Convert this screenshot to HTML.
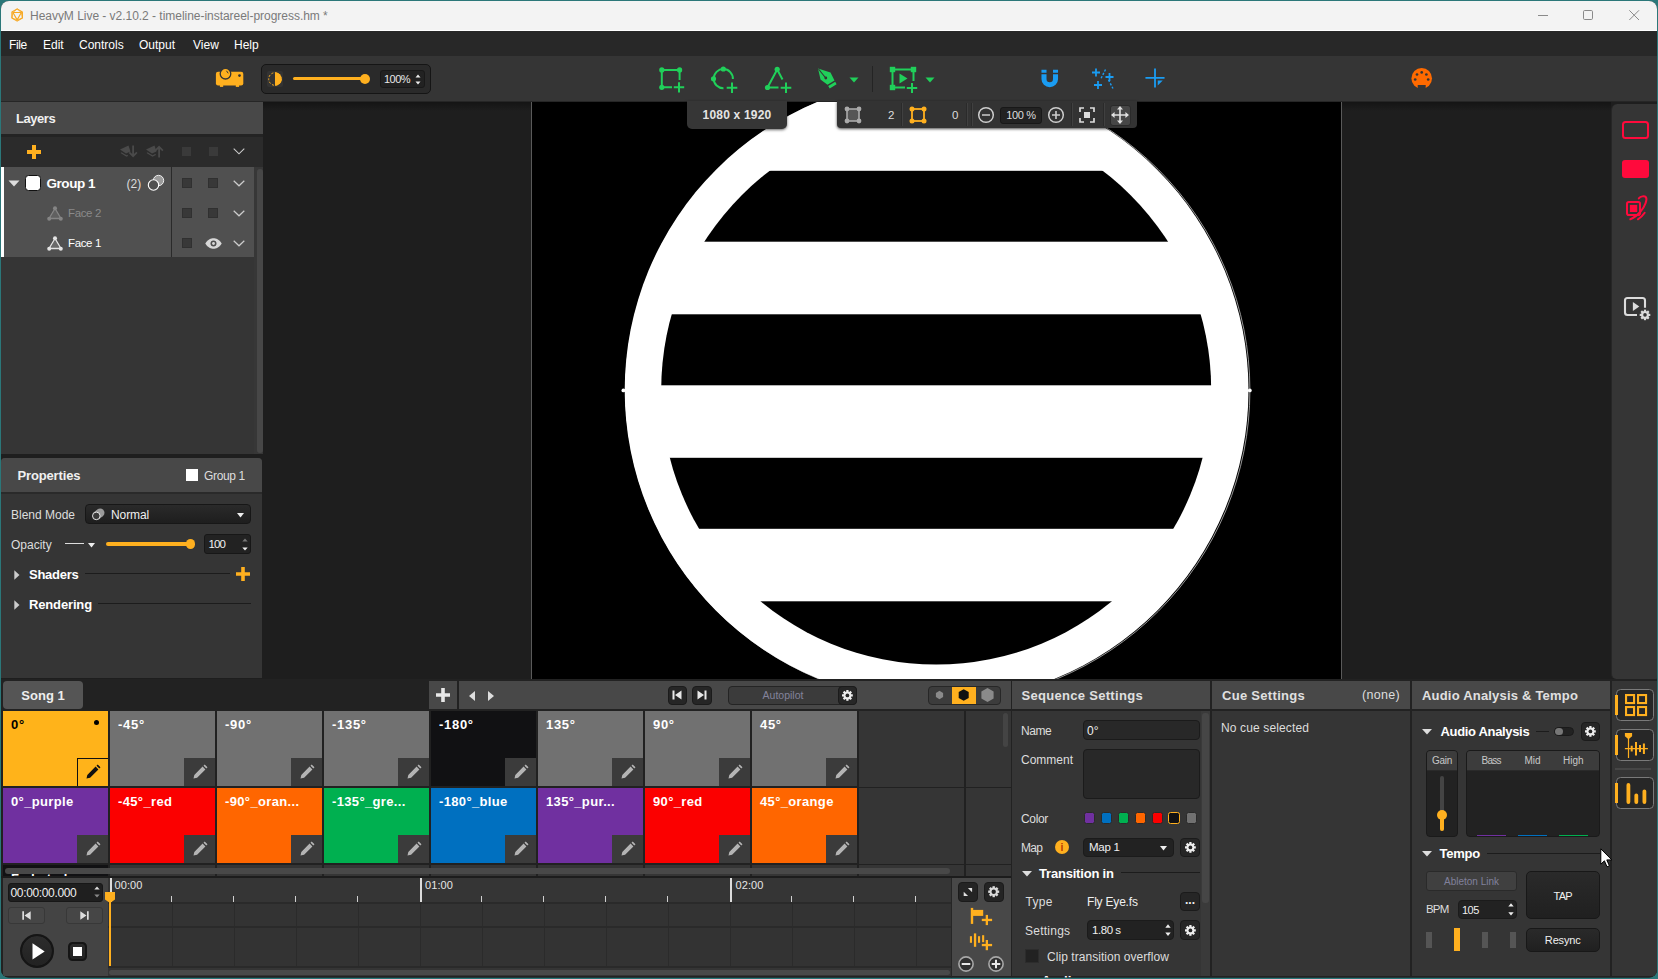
<!DOCTYPE html><html><head><meta charset="utf-8"><title>HeavyM Live</title><style>*{box-sizing:border-box;margin:0;padding:0}
html,body{width:1658px;height:979px;overflow:hidden;background:#2b7779;font-family:"Liberation Sans",sans-serif;font-size:12px;color:#e6e6e6}
#win{position:absolute;left:0;top:0;width:1658px;height:979px;overflow:hidden;background:#1e1e1e;clip-path:inset(1px 1px 1.5px 1px round 8px)}
.a{position:absolute}
.b{font-weight:bold}
svg{position:absolute;overflow:visible}
/* title */
#title{left:0;top:0;width:1658px;height:31px;background:#f3f3f3;border-bottom:1px solid #fff}
#title .t{left:30px;top:9px;font-size:12px;color:#7a7a7a;white-space:nowrap;letter-spacing:-0.03px}
#menu{left:0;top:31px;width:1658px;height:25px;background:#282828}
#menu span{position:absolute;top:7px;font-size:12px;color:#fff;white-space:nowrap}
#tool{left:0;top:56px;width:1658px;height:46px;background:#353535;border-bottom:1px solid #262626}
.ck{width:10px;height:10px;background:#383838;border:1px solid #303030}
</style></head><body>
<div id="win">
<div id="title" class="a">
<svg style="left:10.900px;top:8px" width="12.300" height="14" viewBox="0 0 14 16"><g fill="none" stroke="#f7a823" stroke-width="1.3" stroke-linejoin="round"><path d="M7 1 L13 4.5 L13 11.5 L7 15 L1 11.5 L1 4.5 Z"/><path d="M2.2 5.2 L11.8 5.2 L7 13.6 Z"/><path d="M7 1 L2.2 5.2 M7 1 L11.8 5.2 M1 11.5 L2.2 5.2 M13 11.5 L11.8 5.2 M1 11.5 L7 13.6 L13 11.5" stroke-width="0.9"/></g></svg>
<div class="a t">HeavyM Live - v2.10.2 - timeline-instareel-progress.hm *</div>
<svg style="left:1538px;top:15px" width="12" height="2"><path d="M0 0.5H10" stroke="#8a8a8a" stroke-width="1"/></svg>
<svg style="left:1583px;top:10px" width="12" height="12"><rect x="0.5" y="0.5" width="9" height="9" rx="1.2" fill="none" stroke="#8a8a8a" stroke-width="1"/></svg>
<svg style="left:1629px;top:10px" width="12" height="12"><path d="M0.3 0.3L10 10M10 0.3L0.3 10" stroke="#8a8a8a" stroke-width="1"/></svg>
</div>
<div id="menu" class="a"><span style="left:9px;letter-spacing:-0.4px">File</span><span style="left:43px">Edit</span><span style="left:79px">Controls</span><span style="left:139px">Output</span><span style="left:193px">View</span><span style="left:234px">Help</span></div>
<div id="tool" class="a">
<!-- projector -->
<svg style="left:205px;top:4px" width="50" height="40" viewBox="205 60 50 40"><rect x="215.900" y="71.700" width="27.400" height="13.700" rx="2.200" fill="#ffb01f"/><rect x="219.900" y="84" width="3.300" height="2.900" fill="#ffb01f"/><rect x="235.800" y="84" width="3.300" height="2.900" fill="#ffb01f"/><circle cx="225.500" cy="73.700" r="5.300" fill="#ffb01f" stroke="#353535" stroke-width="1.300"/><path d="M226.700 71.100L228 73" stroke="#353535" stroke-width="1" stroke-linecap="round"/><circle cx="239.500" cy="75.600" r="1.350" fill="#353535"/></svg>
<!-- brightness box -->
<div class="a" style="left:261px;top:8px;width:170px;height:30px;background:#2a2a2a;border:1px solid #151515;border-radius:5px"></div>
<svg style="left:267px;top:15px" width="16" height="16" viewBox="0 0 16 16"><rect x="0" y="0" width="16" height="16" rx="2" fill="#333"/><circle cx="8" cy="8" r="6.3" fill="none" stroke="#ffb01f" stroke-width="1" stroke-dasharray="2 1.6"/><path d="M8 1.2a6.8 6.8 0 0 1 0 13.6z" fill="#ffb01f"/></svg>
<div class="a" style="left:293px;top:21px;width:70px;height:3px;background:#ffb01f;border-radius:2px"></div>
<div class="a" style="left:360px;top:17.5px;width:10px;height:10px;background:#ffb01f;border-radius:5px"></div>
<div class="a" style="left:380px;top:14px;width:45px;height:18px;background:#222;border:1px solid #191919;border-radius:3px"></div>
<div class="a" style="left:384px;top:17px;font-size:11px;color:#e8e8e8;letter-spacing:-0.5px">100%</div>
<svg style="left:415px;top:18px" width="6" height="11" viewBox="0 0 6 11"><path d="M0.5 3.5L3 0.5L5.5 3.5zM0.5 7.5L3 10.5L5.5 7.5z" fill="#eee"/></svg>
<!-- green icons -->
<svg style="left:658px;top:10px" width="28" height="28" viewBox="0 0 28 28"><g stroke="#20d05a" stroke-width="2" fill="none"><path d="M3.8 3.9H21.6V14M3.8 3.9V21.3H14"/><path d="M21 16.2V26.4M15.8 21.3H26.2"/></g><g fill="#20d05a"><circle cx="3.8" cy="3.9" r="2.6"/><circle cx="21.6" cy="3.9" r="2.6"/><circle cx="3.8" cy="21.3" r="2.6"/></g></svg>
<svg style="left:710px;top:10px" width="28" height="28" viewBox="0 0 28 28"><g stroke="#20d05a" stroke-width="2" fill="none"><path d="M13.5 22.3A9.6 9.6 0 1 1 22.9 13"/><path d="M22 16.5V27M16.7 21.8H27.3"/></g><g fill="#20d05a"><circle cx="13.3" cy="3" r="2.6"/><circle cx="3.5" cy="12.8" r="2.6"/></g></svg>
<svg style="left:764px;top:10px" width="28" height="28" viewBox="0 0 28 28"><g stroke="#20d05a" stroke-width="2" fill="none" stroke-linejoin="round"><path d="M14.5 21.5H3.5L13.2 3.5L18.5 13.5"/><path d="M22 16.5V27M16.7 21.8H27.3"/></g><g fill="#20d05a"><circle cx="13.2" cy="3.3" r="2.6"/><circle cx="3.5" cy="21.5" r="2.6"/></g></svg>
<svg style="left:817px;top:12px" width="20" height="21" viewBox="0 0 20 21"><path fill="#20d05a" d="M1 0.5L13.5 4.5L17.5 12.5L10.5 16.8L3.5 11.5zM11.2 18L18.2 13.7L19.6 16.3L12.7 20.6z"/><path d="M1.5 1L8.3 9.5" stroke="#353535" stroke-width="1.1"/><circle cx="8.8" cy="10" r="1.4" fill="#353535"/></svg>
<svg style="left:849px;top:21px" width="10" height="6" viewBox="0 0 10 6"><path d="M0.5 0.5H9.5L5 5.5z" fill="#20d05a"/></svg>
<div class="a" style="left:872px;top:10px;width:1px;height:26px;background:#242424"></div>
<svg style="left:889px;top:10px" width="30" height="28" viewBox="0 0 30 28"><g stroke="#20d05a" stroke-width="2" fill="none"><path d="M3.5 3.5H24.5V15M3.5 3.5V21.5H16"/><path d="M23 17V27M17.8 22H28.2"/></g><g fill="#20d05a"><rect x="0.8" y="0.8" width="5.4" height="5.4"/><rect x="21.8" y="0.8" width="5.4" height="5.4"/><rect x="0.8" y="18.8" width="5.4" height="5.4"/><path d="M10.5 7.5L18.5 12.5L10.5 17.5z"/></g></svg>
<svg style="left:925px;top:21px" width="10" height="6" viewBox="0 0 10 6"><path d="M0.5 0.5H9.5L5 5.5z" fill="#20d05a"/></svg>
<!-- blue icons -->
<svg style="left:1040.8px;top:13px" width="17.5" height="19" viewBox="0 0 19 20"><path fill="#1a9cf2" d="M0.5 5.5H6V10.5a3.5 3.5 0 0 0 7 0V5.5H18.5V10.5a9 9 0 0 1-18 0zM0.5 0.5H6V3.8H0.5zM13 0.5H18.5V3.8H13z"/></svg>
<svg style="left:1091px;top:12px" width="24" height="22" viewBox="0 0 24 22"><g stroke="#1a9cf2" stroke-width="1.8" fill="none"><path d="M5 0.5V8.5M1 4.5H9"/><path d="M18.5 5V13M14.5 9H22.5"/><path d="M7 13V21M3 17H11"/><path d="M14.5 1.5L9.5 11.5" stroke-dasharray="2.2 1.6" stroke-width="1.4"/><path d="M17.5 12L22 20.5" stroke-dasharray="2.2 1.6" stroke-width="1.4"/></g></svg>
<svg style="left:1145px;top:12px" width="20" height="20" viewBox="0 0 22 22"><path d="M11 0.5V21.5M0.5 10.8H21.5" stroke="#1a9cf2" stroke-width="2" fill="none"/><path d="M14 13.8H19.5L14 19.3z" fill="#1a9cf2"/></svg>
<!-- midi -->
<svg style="left:1411px;top:11.500px" width="22" height="22" viewBox="0 0 22 22"><circle cx="10.700" cy="10.400" r="10.300" fill="#ff6a00"/><rect x="6.700" y="17" width="8" height="5" fill="#353535"/><g fill="#353535"><circle cx="4.200" cy="11.500" r="1.350"/><circle cx="6" cy="6.500" r="1.350"/><circle cx="10.700" cy="4.400" r="1.350"/><circle cx="15.400" cy="6.500" r="1.350"/><circle cx="17.200" cy="11.500" r="1.350"/></g></svg>
</div>

<div class="a" id="main-shadow" style="left:263px;top:102px;width:1348px;height:9px;background:linear-gradient(rgba(0,0,0,.32),rgba(0,0,0,0))"></div>
<!-- LAYERS PANEL -->
<div class="a" style="left:1px;top:102px;width:262px;height:352px;background:#353535"></div>
<div class="a" style="left:1px;top:102px;width:262px;height:32px;background:#484848"></div>
<div class="a" style="left:1px;top:134px;width:262px;height:3px;background:#232323"></div>
<div class="a b" style="left:16px;top:111px;font-size:13px;color:#f0f0f0;letter-spacing:-0.45px">Layers</div>
<div class="a" style="left:1px;top:137px;width:262px;height:30px;background:#2b2b2b"></div>
<svg style="left:27px;top:145px" width="14" height="14"><path d="M5 0H9V5H14V9H9V14H5V9H0V5H5z" fill="#ffb01f"/></svg>
<svg style="left:120px;top:145px" width="18" height="13" viewBox="0 0 18 13"><g fill="#4a4a4a"><path d="M0 4.5L8.5 0.5L10.5 6.5L6 8.5z"/><path d="M1.5 7.3L6.5 10.2L7.6 9.7L8 11L6.5 11.7L0.5 8z"/><path d="M12.2 0.5H14V9L16.3 6.7L17.5 7.9L13.1 12.5L8.7 7.9L9.9 6.7L12.2 9z"/></g></svg>
<svg style="left:146px;top:145px" width="18" height="13" viewBox="0 0 18 13"><g fill="#4a4a4a"><path d="M0 4.5L8.5 0.5L10.5 6.5L6 8.5z"/><path d="M1.5 7.3L6.5 10.2L9.5 8.8L9.9 10L6.5 11.7L0.5 8z"/><path d="M12.2 12.5H14V4L16.3 6.3L17.5 5.1L13.1 0.5L8.7 5.1L9.9 6.3L12.2 4z"/></g></svg>
<div class="a" style="left:182px;top:146.5px;width:9px;height:9px;background:#3a3a3a"></div>
<div class="a" style="left:208.5px;top:146.5px;width:9px;height:9px;background:#3a3a3a"></div>
<svg style="left:233px;top:148px" width="12" height="7"><path d="M0.7 0.7L6 5.8L11.3 0.7" stroke="#ccc" stroke-width="1.1" fill="none"/></svg>
<!-- rows -->
<div class="a" style="left:1px;top:167px;width:253px;height:90px;background:#505050"></div>
<div class="a" style="left:1px;top:167px;width:3.3px;height:90px;background:#fff"></div>
<div class="a" style="left:171px;top:167px;width:1.3px;height:90px;background:#2a2a2a"></div>
<div class="a" style="left:254px;top:167px;width:9px;height:287px;background:#373737"></div>
<div class="a" style="left:256.5px;top:168.5px;width:6px;height:284.5px;background:#474747;border-radius:3px"></div>
<!-- group row -->
<svg style="left:8px;top:180px" width="12" height="7"><path d="M0.5 0.5H11.5L6 6.5z" fill="#ddd"/></svg>
<div class="a" style="left:25px;top:175px;width:16px;height:16px;background:#fff;border:1px solid #111;border-radius:3.5px"></div>
<div class="a b" style="left:46.5px;top:176px;font-size:13.5px;color:#fff;white-space:nowrap;letter-spacing:-0.45px">Group 1</div>
<div class="a" style="left:126.5px;top:177px;font-size:12px;color:#ddd">(2)</div>
<svg style="left:147px;top:174px" width="18" height="18" viewBox="0 0 18 18"><circle cx="11.5" cy="6.5" r="5.2" fill="#9a9a9a" stroke="#eee" stroke-width="1"/><circle cx="6.5" cy="11" r="5.2" fill="#505050" stroke="#fff" stroke-width="1.1"/></svg>
<div class="a ck" style="left:182px;top:178px"></div><div class="a ck" style="left:208px;top:178px"></div>
<svg style="left:233px;top:180px" width="12" height="7"><path d="M0.7 0.7L6 5.8L11.3 0.7" stroke="#ccc" stroke-width="1.2" fill="none"/></svg>
<!-- face 2 -->
<svg style="left:47px;top:206px" width="16" height="15" viewBox="0 0 16 15"><path d="M8 2.5L2 12.5H14z" fill="#606060" stroke="#858585" stroke-width="1.3"/><g fill="#858585"><circle cx="8" cy="2.3" r="2"/><circle cx="2.2" cy="12.7" r="2"/><circle cx="13.8" cy="12.7" r="2"/></g></svg>
<div class="a" style="left:68px;top:206.5px;font-size:11.5px;color:#8a8a8a;letter-spacing:-0.35px">Face 2</div>
<div class="a ck" style="left:182px;top:208px"></div><div class="a ck" style="left:208px;top:208px"></div>
<svg style="left:233px;top:210px" width="12" height="7"><path d="M0.7 0.7L6 5.8L11.3 0.7" stroke="#ccc" stroke-width="1.2" fill="none"/></svg>
<!-- face 1 -->
<svg style="left:47px;top:236px" width="16" height="15" viewBox="0 0 16 15"><path d="M8 2.5L2 12.5H14z" fill="#6a6a6a" stroke="#e4e4e4" stroke-width="1.3"/><g fill="#e4e4e4"><circle cx="8" cy="2.3" r="2"/><circle cx="2.2" cy="12.7" r="2"/><circle cx="13.8" cy="12.7" r="2"/></g></svg>
<div class="a" style="left:68px;top:236.5px;font-size:11.5px;color:#fff;letter-spacing:-0.35px">Face 1</div>
<div class="a ck" style="left:182px;top:238px"></div>
<svg style="left:204.5px;top:238px" width="17" height="11" viewBox="0 0 17 11"><path d="M0.3 5.5C3 1.2 6 0.3 8.5 0.3S14 1.2 16.7 5.5C14 9.8 11 10.7 8.5 10.7S3 9.8 0.3 5.5z" fill="#d8d8d8"/><circle cx="8.5" cy="5.5" r="3" fill="#505050"/><circle cx="8.5" cy="5.5" r="1.4" fill="#d8d8d8"/></svg>
<svg style="left:233px;top:240px" width="12" height="7"><path d="M0.7 0.7L6 5.8L11.3 0.7" stroke="#ccc" stroke-width="1.2" fill="none"/></svg>
<!-- PROPERTIES PANEL -->
<div class="a" style="left:1px;top:458px;width:261px;height:220px;background:#353535;border-radius:4px 4px 0 0"></div>
<div class="a" style="left:1px;top:458px;width:261px;height:34px;background:#484848;border-radius:4px 4px 0 0"></div>
<div class="a" style="left:1px;top:492px;width:261px;height:2px;background:#2a2a2a"></div>
<div class="a b" style="left:17.5px;top:467.5px;font-size:13px;color:#f0f0f0;letter-spacing:-0.15px">Properties</div>
<div class="a" style="left:186px;top:469px;width:12px;height:12px;background:#fff"></div>
<div class="a" style="left:204px;top:468.5px;font-size:12px;color:#ddd;white-space:nowrap;letter-spacing:-0.35px">Group 1</div>
<div class="a" style="left:11px;top:507.5px;font-size:12px;color:#ddd;white-space:nowrap">Blend Mode</div>
<div class="a" style="left:85px;top:504px;width:165.5px;height:20px;background:linear-gradient(#2a2a2a,#1e1e1e);border:1px solid #171717;border-radius:4px"></div>
<svg style="left:80px;top:498px" width="30" height="30" viewBox="80 498 30 30"><circle cx="100.200" cy="512.700" r="4.300" fill="#9a9a9a"/><path d="M96.300 515.900L100.200 512.700" stroke="#9a9a9a" stroke-width="8.600"/><circle cx="96.300" cy="515.900" r="3.800" fill="#3a3a3a" stroke="#e4e4e4" stroke-width="1"/></svg>
<div class="a" style="left:111px;top:508px;font-size:12px;color:#f0f0f0;letter-spacing:-0.1px">Normal</div>
<svg style="left:237px;top:512.5px" width="7" height="5"><path d="M0 0H7L3.5 4.5z" fill="#eee"/></svg>
<div class="a" style="left:11px;top:537.5px;font-size:12px;color:#ddd">Opacity</div>
<div class="a" style="left:65px;top:543.3px;width:19px;height:1px;background:#ddd"></div>
<svg style="left:88px;top:542.5px" width="7" height="5"><path d="M0 0H7L3.5 4.5z" fill="#eee"/></svg>
<div class="a" style="left:106px;top:542.2px;width:84px;height:3.8px;background:#ffb01f;border-radius:2px"></div>
<div class="a" style="left:185.8px;top:539.4px;width:9.4px;height:9.4px;background:#ffb01f;border-radius:6px"></div>
<div class="a" style="left:204px;top:534px;width:46.5px;height:20px;background:#222;border:1px solid #171717;border-radius:3px"></div>
<div class="a" style="left:208.5px;top:538px;font-size:11.5px;color:#f0f0f0;letter-spacing:-0.9px">100</div>
<svg style="left:242px;top:537.5px" width="6" height="13" viewBox="0 0 6 13"><path d="M0.3 3.6L3 0.6L5.7 3.6z" fill="#777"/><path d="M0.3 9.5L3 12.5L5.7 9.500z" fill="#eee"/></svg>
<svg style="left:14px;top:569.5px" width="6" height="10"><path d="M0.3 0.3V9.7L5.5 5z" fill="#ccc"/></svg>
<div class="a b" style="left:29px;top:567px;font-size:13px;color:#fff;letter-spacing:-0.25px">Shaders</div>
<div class="a" style="left:84.5px;top:573px;width:145.5px;height:1px;background:#1c1c1c"></div>
<svg style="left:236px;top:567.3px" width="14" height="14"><path d="M5.2 0H8.8V5.2H14V8.8H8.8V14H5.2V8.8H0V5.2H5.2z" fill="#ffb01f"/></svg>
<svg style="left:14px;top:599.5px" width="6" height="10"><path d="M0.3 0.3V9.7L5.5 5z" fill="#ccc"/></svg>
<div class="a b" style="left:29px;top:597px;font-size:13px;color:#fff;letter-spacing:-0.15px">Rendering</div>
<div class="a" style="left:98px;top:603px;width:153px;height:1px;background:#1c1c1c"></div>

<!-- CANVAS -->
<div class="a" style="left:531px;top:102px;width:811px;height:577px;background:#000;border-left:1px solid #5a5a5a;border-right:1px solid #5a5a5a"></div>
<svg style="left:532px;top:102px" width="808" height="577" viewBox="532 102 808 577">
<defs><clipPath id="cv"><rect x="532" y="102" width="808" height="577"/></clipPath><clipPath id="inner"><circle cx="936.2" cy="389.6" r="275"/></clipPath></defs>
<g clip-path="url(#cv)">
<circle cx="937.8" cy="390.4" r="312.1" fill="none" stroke="#a8a8a8" stroke-width="0.9"/><circle cx="936.6" cy="390.2" r="311.9" fill="#fff"/>
<g clip-path="url(#inner)" fill="#000">
<rect x="600" y="170.8" width="680" height="70.9"/>
<rect x="600" y="314.3" width="680" height="71"/>
<rect x="600" y="457.8" width="680" height="71"/>
<rect x="600" y="601.3" width="680" height="71"/>
</g>
<circle cx="623.4" cy="390.4" r="1.9" fill="#fff"/><circle cx="1249.8" cy="390.4" r="1.9" fill="#fff"/>
</g></svg>
<!-- size label -->
<div class="a" style="left:687px;top:101px;width:100px;height:27.5px;background:#363636;border-radius:0 0 5px 5px;box-shadow:0 1px 3px rgba(0,0,0,.6)"></div>
<div class="a b" style="left:687px;top:108px;width:100px;text-align:center;font-size:12px;color:#e4e4e4;letter-spacing:0.2px">1080 x 1920</div>
<!-- canvas toolbar -->
<div class="a" style="left:837px;top:101px;width:300px;height:27px;background:#333;border-radius:0 0 4px 4px;box-shadow:0 1px 3px rgba(0,0,0,.7)"></div>
<svg style="left:844px;top:106px" width="18" height="18" viewBox="0 0 18 18"><rect x="3" y="3" width="12" height="12" fill="#555" stroke="#aaa" stroke-width="1.6"/><g fill="#aaa"><circle cx="3" cy="3" r="2.4"/><circle cx="15" cy="3" r="2.4"/><circle cx="3" cy="15" r="2.4"/><circle cx="15" cy="15" r="2.4"/></g></svg>
<div class="a" style="left:874px;top:108.5px;width:20.5px;text-align:right;font-size:11.5px;color:#ddd">2</div>
<div class="a" style="left:901px;top:103px;width:1px;height:23px;background:#2a2a2a"></div><div class="a" style="left:902px;top:103px;width:1px;height:23px;background:#404040"></div>
<svg style="left:909px;top:106px" width="18" height="18" viewBox="0 0 18 18"><rect x="3" y="3" width="12" height="12" fill="none" stroke="#ffb01f" stroke-width="1.8"/><g fill="#ffb01f"><circle cx="3" cy="3" r="2.5"/><circle cx="15" cy="3" r="2.5"/><circle cx="3" cy="15" r="2.5"/><circle cx="15" cy="15" r="2.5"/></g></svg>
<div class="a" style="left:938px;top:108.5px;width:20.5px;text-align:right;font-size:11.5px;color:#ddd">0</div>
<div class="a" style="left:965.5px;top:103px;width:1px;height:23px;background:#2a2a2a"></div><div class="a" style="left:966.5px;top:103px;width:1px;height:23px;background:#404040"></div>
<div class="a" style="left:970.5px;top:103px;width:1px;height:23px;background:#2a2a2a"></div><div class="a" style="left:971.5px;top:103px;width:1px;height:23px;background:#404040"></div>
<svg style="left:977px;top:106px" width="18" height="18" viewBox="0 0 18 18"><circle cx="9" cy="9" r="7.3" fill="none" stroke="#ccc" stroke-width="1.5"/><path d="M5 9H13" stroke="#ccc" stroke-width="1.6"/></svg>
<div class="a" style="left:1000px;top:106.5px;width:42px;height:17.5px;background:#222;border:1px solid #181818;border-radius:3px"></div>
<div class="a" style="left:1000px;top:109px;width:42px;text-align:center;font-size:11px;color:#ddd;letter-spacing:-0.3px">100 %</div>
<svg style="left:1047px;top:106px" width="18" height="18" viewBox="0 0 18 18"><circle cx="9" cy="9" r="7.3" fill="none" stroke="#ccc" stroke-width="1.5"/><path d="M5 9H13M9 5V13" stroke="#ccc" stroke-width="1.6"/></svg>
<div class="a" style="left:1070.5px;top:103px;width:1px;height:23px;background:#2a2a2a"></div><div class="a" style="left:1071.5px;top:103px;width:1px;height:23px;background:#404040"></div>
<svg style="left:1079px;top:107px" width="16" height="16" viewBox="0 0 16 16"><path d="M1 5V1H5M11 1H15V5M15 11V15H11M5 15H1V11" fill="none" stroke="#ddd" stroke-width="1.7"/><rect x="5" y="5" width="6" height="6" fill="#ddd"/></svg>
<div class="a" style="left:1102.5px;top:103px;width:1px;height:23px;background:#2a2a2a"></div><div class="a" style="left:1103.5px;top:103px;width:1px;height:23px;background:#404040"></div>
<div class="a" style="left:1109.5px;top:104.5px;width:21.5px;height:21px;background:#464646;border:1px solid #2a2a2a;border-radius:3px"></div>
<svg style="left:1111px;top:106px" width="18" height="18" viewBox="0 0 18 18"><path d="M9 1.5V16.5M1.5 9H16.5" stroke="#e0e0e0" stroke-width="1.6" fill="none"/><path d="M9 0L12 3.6H6zM9 18L12 14.4H6zM0 9L3.6 6V12zM18 9L14.4 6V12z" fill="#e0e0e0"/></svg>

<!-- RIGHT SIDEBAR -->
<div class="a" style="left:1610.5px;top:104px;width:48px;height:575px;background:#353535;border-radius:6px 0 4px 5px;border-left:1.500px solid #262626"></div>
<div class="a" style="left:1622.3px;top:121.3px;width:26.8px;height:17.5px;border:2px solid #ff0a3c;border-radius:3.5px"></div>
<div class="a" style="left:1622.3px;top:160px;width:26.8px;height:18px;background:#ff0a3c;border-radius:3px"></div>
<svg style="left:1612px;top:185px" width="46" height="45" viewBox="0 0 46 45"><g fill="none" stroke="#ff0a3c" stroke-width="2" stroke-linecap="round"><rect x="15" y="16.900" width="13" height="13.100" rx="1.800"/><path d="M26.800 13.400C28.500 11.300 32.500 10.500 33.900 12.200C35.600 14.500 33 21 29 26C26 29.500 22 33 18.300 34.300"/><path d="M32.700 27.800C31 30.300 28.500 32.800 25.900 34.300"/></g><rect x="17.900" y="19.900" width="7.300" height="7.100" fill="#ff0a3c"/></svg>
<svg style="left:1612px;top:285px" width="46" height="45" viewBox="0 0 46 45"><path d="M25 30H15.500A2.500 2.500 0 0 1 13 27.500V15.500A2.500 2.500 0 0 1 15.500 13H30.500A2.500 2.500 0 0 1 33 15.500V22.700" fill="none" stroke="#dcdcdc" stroke-width="2.100"/><path d="M20.900 17L27.300 21.600L20.900 26z" fill="#dcdcdc"/><g transform="translate(33 29.900)"><g fill="#dcdcdc"><circle r="3.900"/><rect x="-1.100" y="-5.300" width="2.200" height="2.500"/><rect x="-1.100" y="-5.300" width="2.200" height="2.500" transform="rotate(45)"/><rect x="-1.100" y="-5.300" width="2.200" height="2.500" transform="rotate(90)"/><rect x="-1.100" y="-5.300" width="2.200" height="2.500" transform="rotate(135)"/><rect x="-1.100" y="-5.300" width="2.200" height="2.500" transform="rotate(180)"/><rect x="-1.100" y="-5.300" width="2.200" height="2.500" transform="rotate(225)"/><rect x="-1.100" y="-5.300" width="2.200" height="2.500" transform="rotate(270)"/><rect x="-1.100" y="-5.300" width="2.200" height="2.500" transform="rotate(315)"/></g><circle r="1.800" fill="#353535"/></g></svg>

<!-- BOTTOM LEFT: tabs, cells, timeline -->
<div class="a" style="left:1px;top:679px;width:1657px;height:300px;background:#222"></div>
<div class="a" style="left:3px;top:681px;width:80px;height:28px;background:#555;border-radius:4px"></div>
<div class="a b" style="left:3px;top:688px;width:80px;text-align:center;font-size:13px;color:#eee">Song 1</div>
<div class="a" style="left:429px;top:681px;width:28px;height:28px;background:#484848"></div>
<div class="a" style="left:459px;top:681px;width:552px;height:28px;background:#484848"></div>
<svg style="left:436px;top:688px" width="14" height="14"><path d="M5.200 0H8.800V5.200H14V8.800H8.800V14H5.200V8.800H0V5.200H5.200z" fill="#e8e8e8"/></svg>
<svg style="left:468.500px;top:690.500px" width="6" height="10"><path d="M6 0V10L0 5z" fill="#ddd"/></svg>
<svg style="left:487.500px;top:690.500px" width="6" height="10"><path d="M0 0V10L6 5z" fill="#ddd"/></svg>
<div class="a" style="left:667.5px;top:685.5px;width:19px;height:19px;background:#262626;border:1px solid #1b1b1b;border-radius:4px"></div>
<div class="a" style="left:692px;top:685.5px;width:19.5px;height:19px;background:#262626;border:1px solid #1b1b1b;border-radius:4px"></div>
<svg style="left:672px;top:690px" width="10" height="10"><path d="M0.500 0.500H2.500V9.500H0.500zM9.500 0.500V9.500L3 5z" fill="#e8e8e8"/></svg>
<svg style="left:697px;top:690px" width="10" height="10"><path d="M9.500 0.500H7.500V9.500H9.500zM0.500 0.500V9.500L7 5z" fill="#e8e8e8"/></svg>
<div class="a" style="left:727.500px;top:685.500px;width:129px;height:19px;background:#3b3b3b;border:1px solid #242424;border-radius:4px"></div>
<div class="a" style="left:728px;top:689px;width:110px;text-align:center;font-size:10.500px;color:#83839c">Autopilot</div>
<div class="a" style="left:837.500px;top:685.500px;width:19px;height:19px;background:#272727;border:1px solid #1b1b1b;border-radius:4px"></div>
<svg style="left:841.6px;top:689.6px" width="10.800" height="10.800" viewBox="-6 -6 12 12"><g fill="#eee"><circle r="4.300"/><rect x="-1.250" y="-6" width="2.500" height="3" transform="rotate(0)"/><rect x="-1.250" y="-6" width="2.500" height="3" transform="rotate(45)"/><rect x="-1.250" y="-6" width="2.500" height="3" transform="rotate(90)"/><rect x="-1.250" y="-6" width="2.500" height="3" transform="rotate(135)"/><rect x="-1.250" y="-6" width="2.500" height="3" transform="rotate(180)"/><rect x="-1.250" y="-6" width="2.500" height="3" transform="rotate(225)"/><rect x="-1.250" y="-6" width="2.500" height="3" transform="rotate(270)"/><rect x="-1.250" y="-6" width="2.500" height="3" transform="rotate(315)"/></g><circle r="2.100" fill="#272727"/></svg>
<div class="a" style="left:927.500px;top:685.500px;width:73px;height:19px;background:#3c3c3c;border:1px solid #272727;border-radius:4px"></div>
<div class="a" style="left:952px;top:686.500px;width:23.500px;height:17px;background:#ffb01f"></div>
<svg style="left:0;top:0" width="1" height="1"><polygon points="939.5,690.8 943.1,692.9 943.1,697.1 939.5,699.2 935.9,697.1 935.9,692.9" fill="#8a8a8a"/></svg>
<svg style="left:0;top:0" width="1" height="1"><polygon points="963.7,689.2 968.7,692.1 968.7,697.9 963.7,700.8 958.7,697.9 958.7,692.1" fill="#111"/></svg>
<svg style="left:0;top:0" width="1" height="1"><polygon points="987.5,688.0 993.6,691.5 993.6,698.5 987.5,702.0 981.4,698.5 981.4,691.5" fill="#8a8a8a"/></svg>
<div class="a" style="left:1px;top:710.500px;width:1010px;height:166px;background:#212121"></div>
<div class="a" style="left:859px;top:711px;width:105px;height:75.500px;background:#353535"></div>
<div class="a" style="left:859px;top:788px;width:105px;height:75.500px;background:#353535"></div>
<div class="a" style="left:966px;top:711px;width:45px;height:75.500px;background:#353535"></div>
<div class="a" style="left:966px;top:788px;width:45px;height:75.500px;background:#353535"></div>
<div class="a" style="left:3px;top:865px;width:105px;height:11.500px;background:#111113"></div>
<div class="a" style="left:110px;top:865px;width:105px;height:11.500px;background:#353535"></div>
<div class="a" style="left:217px;top:865px;width:105px;height:11.500px;background:#353535"></div>
<div class="a" style="left:324px;top:865px;width:105px;height:11.500px;background:#353535"></div>
<div class="a" style="left:431px;top:865px;width:105px;height:11.500px;background:#353535"></div>
<div class="a" style="left:538px;top:865px;width:105px;height:11.500px;background:#353535"></div>
<div class="a" style="left:645px;top:865px;width:105px;height:11.500px;background:#353535"></div>
<div class="a" style="left:752px;top:865px;width:105px;height:11.500px;background:#353535"></div>
<div class="a" style="left:859px;top:865px;width:105px;height:11.500px;background:#353535"></div>
<div class="a" style="left:966px;top:865px;width:45px;height:11.500px;background:#353535"></div>
<div class="a b" style="left:11px;top:871.200px;height:5.300px;overflow:hidden;font-size:13px;line-height:15px;color:#fff;letter-spacing:0.350px;white-space:nowrap">Fade to b...</div>
<div class="a" style="left:3px;top:711px;width:105px;height:75px;background:#ffb31a"></div>
<div class="a b" style="left:11px;top:716.5px;font-size:13px;color:#000;white-space:nowrap;letter-spacing:0.7px">0°</div>
<div class="a" style="left:77px;top:758px;width:31px;height:28px;background:#ffb31a;border-left:1px solid #111;border-top:1px solid #111"></div>
<svg style="left:85px;top:764px" width="16" height="16" viewBox="0 0 16 16"><path d="M1.500 14.500L2.300 10.900L10.600 2.600L13.400 5.400L5.100 13.700zM11.500 1.700L12.700 0.500L15.500 3.300L14.300 4.500z" fill="#111"/></svg>
<div class="a" style="left:93.5px;top:719.5px;width:5.500px;height:5.500px;border-radius:3px;background:#000"></div>
<div class="a" style="left:110px;top:711px;width:105px;height:75px;background:#717171"></div>
<div class="a b" style="left:118px;top:716.5px;font-size:13px;color:#fff;white-space:nowrap;letter-spacing:0.7px">-45°</div>
<div class="a" style="left:184.2px;top:758.3px;width:30.800px;height:27.700px;background:#3b3b3b"></div>
<svg style="left:192px;top:764px" width="16" height="16" viewBox="0 0 16 16"><path d="M1.500 14.500L2.300 10.900L10.600 2.600L13.400 5.400L5.100 13.700zM11.500 1.700L12.700 0.500L15.500 3.300L14.300 4.500z" fill="#b4b4b4"/></svg>
<div class="a" style="left:217px;top:711px;width:105px;height:75px;background:#717171"></div>
<div class="a b" style="left:225px;top:716.5px;font-size:13px;color:#fff;white-space:nowrap;letter-spacing:0.7px">-90°</div>
<div class="a" style="left:291.2px;top:758.3px;width:30.800px;height:27.700px;background:#3b3b3b"></div>
<svg style="left:299px;top:764px" width="16" height="16" viewBox="0 0 16 16"><path d="M1.500 14.500L2.300 10.900L10.600 2.600L13.400 5.400L5.100 13.700zM11.500 1.700L12.700 0.500L15.500 3.300L14.300 4.500z" fill="#b4b4b4"/></svg>
<div class="a" style="left:324px;top:711px;width:105px;height:75px;background:#717171"></div>
<div class="a b" style="left:332px;top:716.5px;font-size:13px;color:#fff;white-space:nowrap;letter-spacing:0.7px">-135°</div>
<div class="a" style="left:398.2px;top:758.3px;width:30.800px;height:27.700px;background:#3b3b3b"></div>
<svg style="left:406px;top:764px" width="16" height="16" viewBox="0 0 16 16"><path d="M1.500 14.500L2.300 10.900L10.600 2.600L13.400 5.400L5.100 13.700zM11.500 1.700L12.700 0.500L15.500 3.300L14.300 4.500z" fill="#b4b4b4"/></svg>
<div class="a" style="left:431px;top:711px;width:105px;height:75px;background:#111113"></div>
<div class="a b" style="left:439px;top:716.5px;font-size:13px;color:#fff;white-space:nowrap;letter-spacing:0.7px">-180°</div>
<div class="a" style="left:505.2px;top:758.3px;width:30.800px;height:27.700px;background:#3b3b3b"></div>
<svg style="left:513px;top:764px" width="16" height="16" viewBox="0 0 16 16"><path d="M1.500 14.500L2.300 10.900L10.600 2.600L13.400 5.400L5.100 13.700zM11.500 1.700L12.700 0.500L15.500 3.300L14.300 4.500z" fill="#b4b4b4"/></svg>
<div class="a" style="left:538px;top:711px;width:105px;height:75px;background:#717171"></div>
<div class="a b" style="left:546px;top:716.5px;font-size:13px;color:#fff;white-space:nowrap;letter-spacing:0.7px">135°</div>
<div class="a" style="left:612.2px;top:758.3px;width:30.800px;height:27.700px;background:#3b3b3b"></div>
<svg style="left:620px;top:764px" width="16" height="16" viewBox="0 0 16 16"><path d="M1.500 14.500L2.300 10.900L10.600 2.600L13.400 5.400L5.100 13.700zM11.500 1.700L12.700 0.500L15.500 3.300L14.300 4.500z" fill="#b4b4b4"/></svg>
<div class="a" style="left:645px;top:711px;width:105px;height:75px;background:#717171"></div>
<div class="a b" style="left:653px;top:716.5px;font-size:13px;color:#fff;white-space:nowrap;letter-spacing:0.7px">90°</div>
<div class="a" style="left:719.2px;top:758.3px;width:30.800px;height:27.700px;background:#3b3b3b"></div>
<svg style="left:727px;top:764px" width="16" height="16" viewBox="0 0 16 16"><path d="M1.500 14.500L2.300 10.900L10.600 2.600L13.400 5.400L5.100 13.700zM11.500 1.700L12.700 0.500L15.500 3.300L14.300 4.500z" fill="#b4b4b4"/></svg>
<div class="a" style="left:752px;top:711px;width:105px;height:75px;background:#717171"></div>
<div class="a b" style="left:760px;top:716.5px;font-size:13px;color:#fff;white-space:nowrap;letter-spacing:0.7px">45°</div>
<div class="a" style="left:826.2px;top:758.3px;width:30.800px;height:27.700px;background:#3b3b3b"></div>
<svg style="left:834px;top:764px" width="16" height="16" viewBox="0 0 16 16"><path d="M1.500 14.500L2.300 10.900L10.600 2.600L13.400 5.400L5.100 13.700zM11.500 1.700L12.700 0.500L15.500 3.300L14.300 4.500z" fill="#b4b4b4"/></svg>
<div class="a" style="left:3px;top:788px;width:105px;height:75px;background:#7030a0"></div>
<div class="a b" style="left:11px;top:793.5px;font-size:13px;color:#fff;white-space:nowrap;letter-spacing:0.35px">0°_purple</div>
<div class="a" style="left:77.2px;top:835.3px;width:30.800px;height:27.700px;background:#3b3b3b"></div>
<svg style="left:85px;top:841px" width="16" height="16" viewBox="0 0 16 16"><path d="M1.500 14.500L2.300 10.900L10.600 2.600L13.400 5.400L5.100 13.700zM11.500 1.700L12.700 0.500L15.500 3.300L14.300 4.500z" fill="#b4b4b4"/></svg>
<div class="a" style="left:110px;top:788px;width:105px;height:75px;background:#fb0000"></div>
<div class="a b" style="left:118px;top:793.5px;font-size:13px;color:#fff;white-space:nowrap;letter-spacing:0.35px">-45°_red</div>
<div class="a" style="left:184.2px;top:835.3px;width:30.800px;height:27.700px;background:#3b3b3b"></div>
<svg style="left:192px;top:841px" width="16" height="16" viewBox="0 0 16 16"><path d="M1.500 14.500L2.300 10.900L10.600 2.600L13.400 5.400L5.100 13.700zM11.500 1.700L12.700 0.500L15.500 3.300L14.300 4.500z" fill="#b4b4b4"/></svg>
<div class="a" style="left:217px;top:788px;width:105px;height:75px;background:#ff6600"></div>
<div class="a b" style="left:225px;top:793.5px;font-size:13px;color:#fff;white-space:nowrap;letter-spacing:0.35px">-90°_oran...</div>
<div class="a" style="left:291.2px;top:835.3px;width:30.800px;height:27.700px;background:#3b3b3b"></div>
<svg style="left:299px;top:841px" width="16" height="16" viewBox="0 0 16 16"><path d="M1.500 14.500L2.300 10.900L10.600 2.600L13.400 5.400L5.100 13.700zM11.500 1.700L12.700 0.500L15.500 3.300L14.300 4.500z" fill="#b4b4b4"/></svg>
<div class="a" style="left:324px;top:788px;width:105px;height:75px;background:#00b050"></div>
<div class="a b" style="left:332px;top:793.5px;font-size:13px;color:#fff;white-space:nowrap;letter-spacing:0.35px">-135°_gre...</div>
<div class="a" style="left:398.2px;top:835.3px;width:30.800px;height:27.700px;background:#3b3b3b"></div>
<svg style="left:406px;top:841px" width="16" height="16" viewBox="0 0 16 16"><path d="M1.500 14.500L2.300 10.900L10.600 2.600L13.400 5.400L5.100 13.700zM11.500 1.700L12.700 0.500L15.500 3.300L14.300 4.500z" fill="#b4b4b4"/></svg>
<div class="a" style="left:431px;top:788px;width:105px;height:75px;background:#0070c0"></div>
<div class="a b" style="left:439px;top:793.5px;font-size:13px;color:#fff;white-space:nowrap;letter-spacing:0.35px">-180°_blue</div>
<div class="a" style="left:505.2px;top:835.3px;width:30.800px;height:27.700px;background:#3b3b3b"></div>
<svg style="left:513px;top:841px" width="16" height="16" viewBox="0 0 16 16"><path d="M1.500 14.500L2.300 10.900L10.600 2.600L13.400 5.400L5.100 13.700zM11.500 1.700L12.700 0.500L15.500 3.300L14.300 4.500z" fill="#b4b4b4"/></svg>
<div class="a" style="left:538px;top:788px;width:105px;height:75px;background:#7030a0"></div>
<div class="a b" style="left:546px;top:793.5px;font-size:13px;color:#fff;white-space:nowrap;letter-spacing:0.35px">135°_pur...</div>
<div class="a" style="left:612.2px;top:835.3px;width:30.800px;height:27.700px;background:#3b3b3b"></div>
<svg style="left:620px;top:841px" width="16" height="16" viewBox="0 0 16 16"><path d="M1.500 14.500L2.300 10.900L10.600 2.600L13.400 5.400L5.100 13.700zM11.500 1.700L12.700 0.500L15.500 3.300L14.300 4.500z" fill="#b4b4b4"/></svg>
<div class="a" style="left:645px;top:788px;width:105px;height:75px;background:#fb0000"></div>
<div class="a b" style="left:653px;top:793.5px;font-size:13px;color:#fff;white-space:nowrap;letter-spacing:0.35px">90°_red</div>
<div class="a" style="left:719.2px;top:835.3px;width:30.800px;height:27.700px;background:#3b3b3b"></div>
<svg style="left:727px;top:841px" width="16" height="16" viewBox="0 0 16 16"><path d="M1.500 14.500L2.300 10.900L10.600 2.600L13.400 5.400L5.100 13.700zM11.500 1.700L12.700 0.500L15.500 3.300L14.300 4.500z" fill="#b4b4b4"/></svg>
<div class="a" style="left:752px;top:788px;width:105px;height:75px;background:#ff6600"></div>
<div class="a b" style="left:760px;top:793.5px;font-size:13px;color:#fff;white-space:nowrap;letter-spacing:0.35px">45°_orange</div>
<div class="a" style="left:826.2px;top:835.3px;width:30.800px;height:27.700px;background:#3b3b3b"></div>
<svg style="left:834px;top:841px" width="16" height="16" viewBox="0 0 16 16"><path d="M1.500 14.500L2.300 10.900L10.600 2.600L13.400 5.400L5.100 13.700zM11.500 1.700L12.700 0.500L15.500 3.300L14.300 4.500z" fill="#b4b4b4"/></svg>
<div class="a" style="left:5px;top:868px;width:945px;height:6px;background:#484848;border-radius:3px"></div>
<div class="a" style="left:1002.500px;top:713px;width:5.500px;height:34px;background:#444;border-radius:3px"></div>
<div class="a" style="left:1px;top:876px;width:1010px;height:1.500px;background:#1c1c1c"></div>
<div class="a" style="left:3px;top:877.500px;width:105px;height:98.500px;background:#444"></div>
<div class="a" style="left:108px;top:877.500px;width:842.500px;height:98.500px;background:#353535"></div>
<div class="a" style="left:108px;top:903.500px;width:842.500px;height:62.500px;background:#333"></div>
<div class="a" style="left:950.500px;top:877.500px;width:1.500px;height:100px;background:#262626"></div>
<div class="a" style="left:952px;top:877.500px;width:58.700px;height:98.500px;background:#484848"></div>
<div class="a" style="left:110px;top:878px;width:2.200px;height:24px;background:#dcdcdc"></div>
<div class="a" style="left:109.5px;top:903.500px;width:1px;height:62.500px;background:#2b2b2b"></div>
<div class="a" style="left:171.3px;top:895.500px;width:1.200px;height:6.500px;background:#d0d0d0"></div>
<div class="a" style="left:171.5px;top:903.500px;width:1px;height:62.500px;background:#2b2b2b"></div>
<div class="a" style="left:233.3px;top:895.500px;width:1.200px;height:6.500px;background:#d0d0d0"></div>
<div class="a" style="left:233.5px;top:903.500px;width:1px;height:62.500px;background:#2b2b2b"></div>
<div class="a" style="left:295.3px;top:895.500px;width:1.200px;height:6.500px;background:#d0d0d0"></div>
<div class="a" style="left:295.5px;top:903.500px;width:1px;height:62.500px;background:#2b2b2b"></div>
<div class="a" style="left:357.3px;top:895.500px;width:1.200px;height:6.500px;background:#d0d0d0"></div>
<div class="a" style="left:357.5px;top:903.500px;width:1px;height:62.500px;background:#2b2b2b"></div>
<div class="a" style="left:420px;top:878px;width:2.200px;height:24px;background:#dcdcdc"></div>
<div class="a" style="left:419.5px;top:903.500px;width:1px;height:62.500px;background:#2b2b2b"></div>
<div class="a" style="left:481.3px;top:895.500px;width:1.200px;height:6.500px;background:#d0d0d0"></div>
<div class="a" style="left:481.5px;top:903.500px;width:1px;height:62.500px;background:#2b2b2b"></div>
<div class="a" style="left:543.3px;top:895.500px;width:1.200px;height:6.500px;background:#d0d0d0"></div>
<div class="a" style="left:543.5px;top:903.500px;width:1px;height:62.500px;background:#2b2b2b"></div>
<div class="a" style="left:605.3px;top:895.500px;width:1.200px;height:6.500px;background:#d0d0d0"></div>
<div class="a" style="left:605.5px;top:903.500px;width:1px;height:62.500px;background:#2b2b2b"></div>
<div class="a" style="left:667.3px;top:895.500px;width:1.200px;height:6.500px;background:#d0d0d0"></div>
<div class="a" style="left:667.5px;top:903.500px;width:1px;height:62.500px;background:#2b2b2b"></div>
<div class="a" style="left:730px;top:878px;width:2.200px;height:24px;background:#dcdcdc"></div>
<div class="a" style="left:729.5px;top:903.500px;width:1px;height:62.500px;background:#2b2b2b"></div>
<div class="a" style="left:791.3px;top:895.500px;width:1.200px;height:6.500px;background:#d0d0d0"></div>
<div class="a" style="left:791.5px;top:903.500px;width:1px;height:62.500px;background:#2b2b2b"></div>
<div class="a" style="left:853.3px;top:895.500px;width:1.200px;height:6.500px;background:#d0d0d0"></div>
<div class="a" style="left:853.5px;top:903.500px;width:1px;height:62.500px;background:#2b2b2b"></div>
<div class="a" style="left:915.3px;top:895.500px;width:1.200px;height:6.500px;background:#d0d0d0"></div>
<div class="a" style="left:915.5px;top:903.500px;width:1px;height:62.500px;background:#2b2b2b"></div>
<div class="a" style="left:114.5px;top:878.500px;font-size:11px;color:#e6e6e6;letter-spacing:0.100px">00:00</div>
<div class="a" style="left:425px;top:878.500px;font-size:11px;color:#e6e6e6;letter-spacing:0.100px">01:00</div>
<div class="a" style="left:735.5px;top:878.500px;font-size:11px;color:#e6e6e6;letter-spacing:0.100px">02:00</div>
<div class="a" style="left:108px;top:902px;width:842.500px;height:1.500px;background:#2a2a2a"></div>
<div class="a" style="left:108px;top:926.400px;width:842.500px;height:1.600px;background:#2a2a2a"></div>
<div class="a" style="left:108px;top:966px;width:842.500px;height:2px;background:#2a2a2a"></div>
<div class="a" style="left:109px;top:969.500px;width:840.500px;height:5.500px;background:#494949;border-radius:3px"></div>
<div class="a" style="left:108.700px;top:895px;width:2.600px;height:71px;background:#ffb01f"></div>
<svg style="left:105px;top:892px" width="10" height="11"><path d="M0 0H10V7.500L5 11L0 7.500z" fill="#ffb01f"/></svg>
<div class="a" style="left:7.500px;top:882.500px;width:95.500px;height:19.500px;background:#1f1f1f;border:1px solid #171717;border-radius:3px"></div>
<div class="a" style="left:10.500px;top:885.500px;font-size:12px;color:#f0f0f0;letter-spacing:-0.350px">00:00:00.000</div>
<svg style="left:94px;top:886px" width="6" height="12" viewBox="0 0 6 12"><path d="M0.300 3.500L3 0.500L5.700 3.500z" fill="#ddd"/><path d="M0.300 8.500L3 11.500L5.700 8.500z" fill="#888"/></svg>
<div class="a" style="left:7.500px;top:907px;width:37.500px;height:16.500px;background:#464646;border:1px solid #383838;border-radius:3px"></div>
<div class="a" style="left:65.500px;top:907px;width:37.500px;height:16.500px;background:#464646;border:1px solid #383838;border-radius:3px"></div>
<svg style="left:22px;top:911px" width="9" height="9"><path d="M0.300 0.300H2V8.700H0.300zM8.700 0.300V8.700L2.500 4.500z" fill="#ddd"/></svg>
<svg style="left:80px;top:911px" width="9" height="9"><path d="M8.700 0.300H7V8.700H8.700zM0.300 0.300V8.700L6.500 4.500z" fill="#ddd"/></svg>
<div class="a" style="left:20px;top:934px;width:34px;height:34px;border-radius:17px;background:linear-gradient(#2c2c2c,#222) padding-box,#151515;border:2px solid #151515"></div>
<svg style="left:32.300px;top:942.700px" width="13" height="17"><path d="M0.500 0.300V16.500L12.700 8.400z" fill="#fff"/></svg>
<div class="a" style="left:67.500px;top:941.500px;width:19.500px;height:19px;background:linear-gradient(#2c2c2c,#222) padding-box,#151515;border:2px solid #151515;border-radius:4.500px"></div>
<div class="a" style="left:73px;top:947px;width:8.500px;height:8.500px;background:#fff"></div>
<div class="a" style="left:958px;top:882px;width:20px;height:20px;background:#242424;border:1px solid #1b1b1b;border-radius:4px"></div>
<div class="a" style="left:984px;top:882px;width:20px;height:20px;background:#242424;border:1px solid #1b1b1b;border-radius:4px"></div>
<svg style="left:950px;top:876px" width="64" height="103" viewBox="0 0 64 103"><path d="M17.900 12.100H22.100V16.300zM13.700 15.800V20H18.100z" fill="#e0e0e0"/></svg>
<svg style="left:988.300px;top:886.300px" width="11.400" height="11.400" viewBox="-6 -6 12 12"><g fill="#dadada"><circle r="4.300"/><rect x="-1.250" y="-5.800" width="2.500" height="3" transform="rotate(0)"/><rect x="-1.250" y="-5.800" width="2.500" height="3" transform="rotate(45)"/><rect x="-1.250" y="-5.800" width="2.500" height="3" transform="rotate(90)"/><rect x="-1.250" y="-5.800" width="2.500" height="3" transform="rotate(135)"/><rect x="-1.250" y="-5.800" width="2.500" height="3" transform="rotate(180)"/><rect x="-1.250" y="-5.800" width="2.500" height="3" transform="rotate(225)"/><rect x="-1.250" y="-5.800" width="2.500" height="3" transform="rotate(270)"/><rect x="-1.250" y="-5.800" width="2.500" height="3" transform="rotate(315)"/></g><circle r="2.300" fill="#242424"/></svg>
<svg style="left:950px;top:876px" width="64" height="103" viewBox="0 0 64 103"><g fill="#ffb01f"><rect x="20.800" y="31.900" width="2.400" height="16"/><rect x="23" y="33.900" width="10.200" height="6"/><rect x="31.800" y="42.800" width="10.300" height="2.300"/><rect x="35.700" y="38.900" width="2.300" height="10.200"/><rect x="19.900" y="60.200" width="2.100" height="6.600"/><rect x="23.900" y="57.400" width="2.300" height="13.400"/><rect x="28" y="60.200" width="2.100" height="6.600"/><rect x="32.100" y="59.200" width="2.100" height="7"/><rect x="31.800" y="67.900" width="10.300" height="2.300"/><rect x="35.700" y="64" width="2.300" height="10.200"/></g></svg>
<svg style="left:957px;top:954.9px" width="18" height="18" viewBox="-9 -9 18 18"><circle r="7.100" fill="#303030" stroke="#a8a8a8" stroke-width="1.600"/><path d="M-4.300 0H4.300" stroke="#e8e8e8" stroke-width="2"/></svg>
<svg style="left:987px;top:954.9px" width="18" height="18" viewBox="-9 -9 18 18"><circle r="7.100" fill="#303030" stroke="#a8a8a8" stroke-width="1.600"/><path d="M-4.300 0H4.300M0 -4.300V4.300" stroke="#e8e8e8" stroke-width="2"/></svg>
<!-- BOTTOM RIGHT PANELS -->
<div class="a" style="left:1012px;top:681px;width:198px;height:28px;background:#484848"></div>
<div class="a" style="left:1012px;top:710.500px;width:198px;height:265.800px;background:#353535"></div>
<div class="a" style="left:1212px;top:681px;width:198.3px;height:28px;background:#484848"></div>
<div class="a" style="left:1212px;top:710.500px;width:198.3px;height:265.800px;background:#353535"></div>
<div class="a" style="left:1412px;top:681px;width:198px;height:28px;background:#484848"></div>
<div class="a" style="left:1412px;top:710.500px;width:198px;height:265.800px;background:#353535"></div>
<div class="a b" style="left:1021.5px;top:688px;font-size:13px;color:#e0e0e0;white-space:nowrap;letter-spacing:0.300px">Sequence Settings</div>
<div class="a b" style="left:1222px;top:688px;font-size:13px;color:#e0e0e0;white-space:nowrap;letter-spacing:0.300px">Cue Settings</div>
<div class="a" style="left:1362px;top:688px;font-size:12.5px;color:#ddd;white-space:nowrap;letter-spacing:0.300px">(none)</div>
<div class="a b" style="left:1422px;top:688px;font-size:13px;color:#e0e0e0;white-space:nowrap;letter-spacing:0.200px">Audio Analysis &amp; Tempo</div>
<div class="a" style="left:1021px;top:724px;font-size:12px;color:#ddd;white-space:nowrap;letter-spacing:-0.450px">Name</div>
<div class="a" style="left:1083.2px;top:720.3px;width:116.8px;height:19.4px;background:#282828;border:1px solid #1b1b1b;border-radius:4px;"></div>
<div class="a" style="left:1087px;top:723.5px;font-size:12px;color:#f0f0f0;white-space:nowrap;">0°</div>
<div class="a" style="left:1021px;top:752.5px;font-size:12px;color:#ddd;white-space:nowrap;">Comment</div>
<div class="a" style="left:1083.2px;top:749.3px;width:116.8px;height:49.3px;background:#282828;border:1px solid #1b1b1b;border-radius:4px;"></div>
<div class="a" style="left:1021px;top:811.5px;font-size:12px;color:#ddd;white-space:nowrap;letter-spacing:-0.350px">Color</div>
<div class="a" style="left:1083.5px;top:812.400px;width:11.400px;height:11.400px;background:#7030a0;border:1px solid #2a2a2a;border-radius:2.500px"></div>
<div class="a" style="left:1100.5px;top:812.400px;width:11.400px;height:11.400px;background:#0070c0;border:1px solid #2a2a2a;border-radius:2.500px"></div>
<div class="a" style="left:1117.5px;top:812.400px;width:11.400px;height:11.400px;background:#00b050;border:1px solid #2a2a2a;border-radius:2.500px"></div>
<div class="a" style="left:1134.5px;top:812.400px;width:11.400px;height:11.400px;background:#ff6600;border:1px solid #2a2a2a;border-radius:2.500px"></div>
<div class="a" style="left:1151.5px;top:812.400px;width:11.400px;height:11.400px;background:#fb0000;border:1px solid #2a2a2a;border-radius:2.500px"></div>
<div class="a" style="left:1167.8px;top:811.800px;width:12.600px;height:12.600px;background:#111113;border:1.200px solid #ffb01f;border-radius:2.500px"></div>
<div class="a" style="left:1185.5px;top:812.400px;width:11.400px;height:11.400px;background:#717171;border:1px solid #2a2a2a;border-radius:2.500px"></div>
<div class="a" style="left:1021px;top:840.5px;font-size:12px;color:#ddd;white-space:nowrap;letter-spacing:-0.750px">Map</div>
<div class="a" style="left:1055px;top:840px;width:14px;height:14px;border-radius:7px;background:#ffb01f"></div>
<div class="a b" style="left:1055px;top:840.500px;width:14px;text-align:center;font-size:10.500px;color:#b83a00">i</div>
<div class="a" style="left:1083.2px;top:837.7px;width:90.4px;height:19px;background:#222;border:1px solid #1b1b1b;border-radius:4px;"></div>
<div class="a" style="left:1089px;top:841px;font-size:11.5px;color:#f0f0f0;white-space:nowrap;letter-spacing:-0.250px">Map 1</div>
<svg style="left:1160px;top:846px" width="7" height="5"><path d="M0 0H7L3.500 4.500z" fill="#eee"/></svg>
<div class="a" style="left:1180px;top:837.7px;width:20px;height:19px;background:#262626;border:1px solid #1b1b1b;border-radius:4px;"></div>
<svg style="left:1184.8px;top:841.8px" width="10.800" height="10.800" viewBox="-6 -6 12 12"><g fill="#eee"><circle r="4.300"/><rect x="-1.250" y="-6" width="2.500" height="3" transform="rotate(0)"/><rect x="-1.250" y="-6" width="2.500" height="3" transform="rotate(45)"/><rect x="-1.250" y="-6" width="2.500" height="3" transform="rotate(90)"/><rect x="-1.250" y="-6" width="2.500" height="3" transform="rotate(135)"/><rect x="-1.250" y="-6" width="2.500" height="3" transform="rotate(180)"/><rect x="-1.250" y="-6" width="2.500" height="3" transform="rotate(225)"/><rect x="-1.250" y="-6" width="2.500" height="3" transform="rotate(270)"/><rect x="-1.250" y="-6" width="2.500" height="3" transform="rotate(315)"/></g><circle r="2.100" fill="#262626"/></svg>
<svg style="left:1021.500px;top:871px" width="10" height="6"><path d="M0 0H10L5 5.500z" fill="#ddd"/></svg>
<div class="a b" style="left:1039px;top:865.5px;font-size:13px;color:#fff;white-space:nowrap;letter-spacing:-0.200px">Transition in</div>
<div class="a" style="left:1121px;top:872px;width:79px;height:1px;background:#1c1c1c"></div>
<div class="a" style="left:1025.5px;top:895px;font-size:12px;color:#ddd;white-space:nowrap;letter-spacing:0.300px">Type</div>
<div class="a" style="left:1087px;top:895px;font-size:12px;color:#f0f0f0;white-space:nowrap;letter-spacing:-0.200px">Fly Eye.fs</div>
<div class="a" style="left:1180px;top:891.5px;width:20px;height:19px;background:#262626;border:1px solid #1b1b1b;border-radius:4px;"></div>
<div class="a b" style="left:1185px;top:892.5px;font-size:12px;color:#eee;white-space:nowrap;">...</div>
<div class="a" style="left:1025px;top:923.5px;font-size:12px;color:#ddd;white-space:nowrap;letter-spacing:0.250px">Settings</div>
<div class="a" style="left:1087px;top:920.3px;width:86.6px;height:19.5px;background:#222;border:1px solid #1b1b1b;border-radius:4px;"></div>
<div class="a" style="left:1092px;top:924px;font-size:11.5px;color:#f0f0f0;white-space:nowrap;letter-spacing:-0.450px">1.80 s</div>
<svg style="left:1164.500px;top:924px" width="6" height="12" viewBox="0 0 6 12"><path d="M0.300 3.800L3 0.300L5.700 3.800z" fill="#eee"/><path d="M0.300 8.500L3 12L5.700 8.500z" fill="#eee"/></svg>
<div class="a" style="left:1180px;top:920.3px;width:20px;height:19.5px;background:#262626;border:1px solid #1b1b1b;border-radius:4px;"></div>
<svg style="left:1184.8px;top:924.6px" width="10.800" height="10.800" viewBox="-6 -6 12 12"><g fill="#eee"><circle r="4.300"/><rect x="-1.250" y="-6" width="2.500" height="3" transform="rotate(0)"/><rect x="-1.250" y="-6" width="2.500" height="3" transform="rotate(45)"/><rect x="-1.250" y="-6" width="2.500" height="3" transform="rotate(90)"/><rect x="-1.250" y="-6" width="2.500" height="3" transform="rotate(135)"/><rect x="-1.250" y="-6" width="2.500" height="3" transform="rotate(180)"/><rect x="-1.250" y="-6" width="2.500" height="3" transform="rotate(225)"/><rect x="-1.250" y="-6" width="2.500" height="3" transform="rotate(270)"/><rect x="-1.250" y="-6" width="2.500" height="3" transform="rotate(315)"/></g><circle r="2.100" fill="#262626"/></svg>
<div class="a" style="left:1025px;top:949px;width:14px;height:14px;background:#222;border:1px solid #2c2c2c"></div>
<div class="a" style="left:1047px;top:949.5px;font-size:12px;color:#ddd;white-space:nowrap;letter-spacing:0.050px">Clip transition overflow</div>
<div class="a b" style="left:1041.500px;top:972.500px;height:5px;overflow:hidden;font-size:13.500px;line-height:15px;color:#fff">Audio</div>
<div class="a" style="left:1201px;top:710.500px;width:8.500px;height:265.800px;background:#3a3a3a"></div>
<div class="a" style="left:1202px;top:713px;width:6.500px;height:190px;background:#464646;border-radius:3px"></div>
<div class="a" style="left:1221px;top:720.5px;font-size:12px;color:#ddd;white-space:nowrap;letter-spacing:0.130px">No cue selected</div>
<svg style="left:1422px;top:729px" width="10" height="6"><path d="M0 0H10L5 5.500z" fill="#ddd"/></svg>
<div class="a b" style="left:1440.5px;top:724px;font-size:13px;color:#fff;white-space:nowrap;letter-spacing:-0.330px">Audio Analysis</div>
<div class="a" style="left:1535.500px;top:730.500px;width:13.500px;height:1px;background:#1c1c1c"></div>
<div class="a" style="left:1554px;top:726.500px;width:20px;height:9.500px;border-radius:5px;background:#222;border:1px solid #1a1a1a"></div>
<div class="a" style="left:1555px;top:727.500px;width:7.500px;height:7.500px;border-radius:4px;background:#777"></div>
<div class="a" style="left:1580.5px;top:722px;width:19.5px;height:18.5px;background:#262626;border:1px solid #1b1b1b;border-radius:4px;"></div>
<svg style="left:1584.8px;top:725.8px" width="10.800" height="10.800" viewBox="-6 -6 12 12"><g fill="#eee"><circle r="4.300"/><rect x="-1.250" y="-6" width="2.500" height="3" transform="rotate(0)"/><rect x="-1.250" y="-6" width="2.500" height="3" transform="rotate(45)"/><rect x="-1.250" y="-6" width="2.500" height="3" transform="rotate(90)"/><rect x="-1.250" y="-6" width="2.500" height="3" transform="rotate(135)"/><rect x="-1.250" y="-6" width="2.500" height="3" transform="rotate(180)"/><rect x="-1.250" y="-6" width="2.500" height="3" transform="rotate(225)"/><rect x="-1.250" y="-6" width="2.500" height="3" transform="rotate(270)"/><rect x="-1.250" y="-6" width="2.500" height="3" transform="rotate(315)"/></g><circle r="2.100" fill="#262626"/></svg>
<div class="a" style="left:1426px;top:749.500px;width:32px;height:87px;background:#222;border:1px solid #1a1a1a;border-radius:4px;overflow:hidden"><div style="height:20px;background:#3c3c3c;border-bottom:1px solid #2a2a2a"></div></div>
<div class="a" style="left:1432px;top:755px;font-size:10px;color:#c8c8c8;white-space:nowrap;letter-spacing:-0.300px">Gain</div>
<div class="a" style="left:1440px;top:776px;width:4px;height:55px;background:#444;border-radius:2px"></div>
<div class="a" style="left:1440px;top:815px;width:4px;height:16px;background:#ffb01f;border-radius:2px"></div>
<div class="a" style="left:1436.700px;top:809.800px;width:10.600px;height:10.600px;background:#ffb01f;border-radius:6px"></div>
<div class="a" style="left:1465.500px;top:749.500px;width:134.500px;height:87px;background:#222;border:1px solid #1a1a1a;border-radius:4px;overflow:hidden"><div style="height:20px;background:#3c3c3c;border-bottom:1px solid #2a2a2a"></div></div>
<div class="a" style="left:1481.5px;top:755px;font-size:10px;color:#c8c8c8;white-space:nowrap;letter-spacing:-0.750px">Bass</div>
<div class="a" style="left:1524.5px;top:755px;font-size:10px;color:#c8c8c8;white-space:nowrap;">Mid</div>
<div class="a" style="left:1563px;top:755px;font-size:10px;color:#c8c8c8;white-space:nowrap;">High</div>
<div class="a" style="left:1477px;top:834.800px;width:29.300px;height:1.200px;background:#7030a0"></div>
<div class="a" style="left:1518px;top:834.800px;width:29.300px;height:1.200px;background:#0070c0"></div>
<div class="a" style="left:1558.7px;top:834.800px;width:29.300px;height:1.200px;background:#00b050"></div>
<svg style="left:1422px;top:851px" width="10" height="6"><path d="M0 0H10L5 5.500z" fill="#ddd"/></svg>
<div class="a b" style="left:1439.5px;top:845.5px;font-size:13px;color:#fff;white-space:nowrap;letter-spacing:-0.250px">Tempo</div>
<div class="a" style="left:1487px;top:852.500px;width:113px;height:1px;background:#1c1c1c"></div>
<div class="a" style="left:1426px;top:871px;width:91px;height:20px;background:#404040;border:1px solid #2a2a2a;border-radius:3px;"></div>
<div class="a" style="left:1426px;top:875.500px;width:91px;text-align:center;font-size:10px;color:#80809c">Ableton Link</div>
<div class="a" style="left:1525.500px;top:871px;width:74.500px;height:48px;background:linear-gradient(#2a2a2a,#202020);border:1px solid #181818;border-radius:5px"></div>
<div class="a" style="left:1525.500px;top:890px;width:74.500px;text-align:center;font-size:11px;color:#f0f0f0;letter-spacing:-0.700px">TAP</div>
<div class="a" style="left:1426px;top:903px;font-size:11.5px;color:#ddd;white-space:nowrap;letter-spacing:-0.800px">BPM</div>
<div class="a" style="left:1457.5px;top:899.5px;width:59.5px;height:19.5px;background:#222;border:1px solid #1b1b1b;border-radius:4px;"></div>
<div class="a" style="left:1462px;top:903.5px;font-size:11px;color:#f0f0f0;white-space:nowrap;letter-spacing:-0.500px">105</div>
<svg style="left:1507.500px;top:903px" width="6" height="13" viewBox="0 0 6 13"><path d="M0.300 3.600L3 0.200L5.700 3.600z" fill="#eee"/><path d="M0.300 9.200L3 12.600L5.700 9.200z" fill="#eee"/></svg>
<div class="a" style="left:1426px;top:932px;width:6px;height:16px;background:#555"></div>
<div class="a" style="left:1482px;top:932px;width:6px;height:16px;background:#555"></div>
<div class="a" style="left:1510px;top:932px;width:6px;height:16px;background:#555"></div>
<div class="a" style="left:1454px;top:928px;width:6.200px;height:23px;background:#ffb01f"></div>
<div class="a" style="left:1525.500px;top:927.500px;width:74.500px;height:24.500px;background:linear-gradient(#2a2a2a,#202020);border:1px solid #181818;border-radius:5px"></div>
<div class="a" style="left:1525.500px;top:933.500px;width:74.500px;text-align:center;font-size:11px;color:#f0f0f0;letter-spacing:-0.150px">Resync</div>
<div class="a" style="left:1611.800px;top:681px;width:46.500px;height:295.300px;background:#353535"></div>
<div class="a" style="left:1616px;top:689px;width:38px;height:32px;background:#272727;border:1px solid #7a7a7a;border-radius:4.500px"></div>
<div class="a" style="left:1615px;top:695px;width:3px;height:20px;background:#ffb01f"></div>
<div class="a" style="left:1616px;top:729px;width:38px;height:32px;background:#272727;border:1px solid #7a7a7a;border-radius:4.500px"></div>
<div class="a" style="left:1615px;top:735px;width:3px;height:20px;background:#ffb01f"></div>
<div class="a" style="left:1616px;top:777px;width:38px;height:32px;background:#272727;border:1px solid #7a7a7a;border-radius:4.500px"></div>
<div class="a" style="left:1615px;top:783px;width:3px;height:20px;background:#ffb01f"></div>
<div class="a" style="left:1615px;top:768px;width:36px;height:1.500px;background:#464646"></div>
<svg style="left:1625px;top:694px" width="22" height="22" viewBox="0 0 22 22"><g fill="none" stroke="#ffb01f" stroke-width="2.100"><rect x="1.050" y="1.050" width="8" height="8"/><rect x="13.050" y="1.050" width="8" height="8"/><rect x="1.050" y="13.050" width="8" height="8"/><rect x="13.050" y="13.050" width="8" height="8"/></g></svg>
<svg style="left:1606px;top:680px" width="52" height="100" viewBox="0 0 52 100"><path d="M18.900 53.100H26.100V56.200L22.500 59.300L18.900 56.200z" fill="#ffb01f"/><g stroke="#ffb01f" fill="none"><path d="M22.500 58V77.900M18.900 68.600H41.900" stroke-width="1.200"/><path d="M25.700 65.700V71.400M30 62.100V75.400M34 65V71.900M37.900 63.600V73.900" stroke-width="2"/></g></svg>
<svg style="left:1625.500px;top:783px" width="22" height="21" viewBox="0 0 22 21"><path d="M2.400 2V19M10.300 12.300V19M18.400 8.300V19" stroke="#ffb01f" stroke-width="3.800" stroke-linecap="round" fill="none"/></svg>
<svg style="left:1600px;top:847.500px" width="13" height="20" viewBox="0 0 13 20"><path d="M0.800 0.800V16.200L4.400 12.800L7 18.800L9.400 17.800L6.800 11.900H11.800z" fill="#fff" stroke="#000" stroke-width="1" stroke-linejoin="round"/></svg>
</div></body></html>
